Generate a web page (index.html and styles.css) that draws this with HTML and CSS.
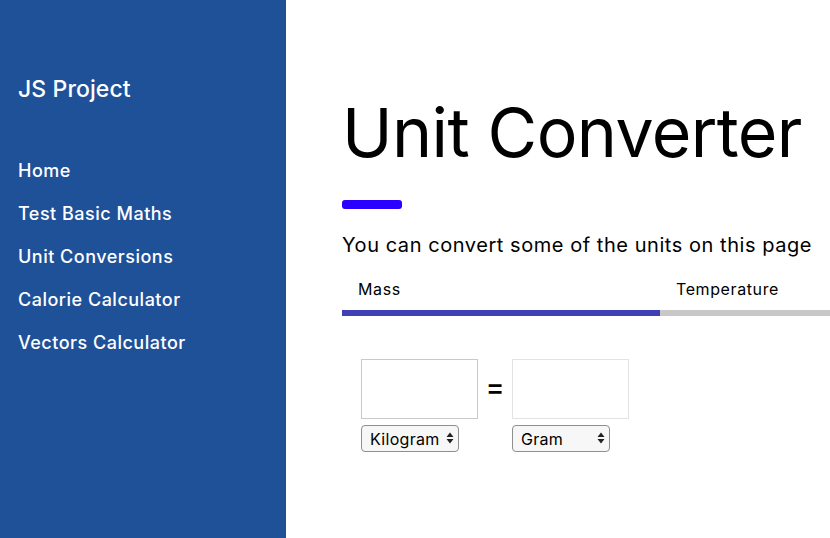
FILE: index.html
```html
<!DOCTYPE html>
<html>
<head>
<meta charset="utf-8">
<link rel="stylesheet" href="styles.css">
</head>
<body>
<div class="app">
  <aside class="sidebar">
    <div class="brand">JS Project</div>
    <nav class="nav">
      <a href="#">Home</a>
      <a href="#">Test Basic Maths</a>
      <a href="#">Unit Conversions</a>
      <a href="#">Calorie Calculator</a>
      <a href="#">Vectors Calculator</a>
    </nav>
  </aside>
  <main class="main">
    <h1 class="title">Unit Converter</h1>
    <div class="accent"></div>
    <p class="lead">You can convert some of the units on this page</p>
    <div class="tabs">
      <div class="tab active">Mass</div>
      <div class="tab">Temperature</div>
    </div>
    <div class="converter">
      <div class="col">
        <input class="box" type="text">
        <div class="sel">
          <select><option>Kilogram</option><option>Gram</option></select>
          <svg class="arrows" width="8" height="12" viewBox="0 0 8 12"><path d="M4 0.5 L7.5 5 H0.5 Z M4 11.5 L7.5 7 H0.5 Z" fill="#222"/></svg>
        </div>
      </div>
      <div class="eq">=</div>
      <div class="col">
        <input class="box light" type="text">
        <div class="sel">
          <select><option>Gram</option><option>Kilogram</option></select>
          <svg class="arrows" width="8" height="12" viewBox="0 0 8 12"><path d="M4 0.5 L7.5 5 H0.5 Z M4 11.5 L7.5 7 H0.5 Z" fill="#222"/></svg>
        </div>
      </div>
    </div>
  </main>
</div>
</body>
</html>
```
FILE: styles.css
```css
* { box-sizing: border-box; }
html, body { margin: 0; padding: 0; }
body {
  font-family: "Inter", "Noto Sans", sans-serif;
  color: #000;
  background: #fff;
  overflow: hidden;
}
.app {
  display: flex;
  height: 538px;
}
.sidebar {
  width: 286px;
  flex: 0 0 286px;
  background: #1f5199;
  color: #fff;
  padding: 74px 0 0 18px;
}
.brand {
  font-size: 23px;
  font-weight: 500;
  line-height: 30px;
  letter-spacing: 0.1px;
}
.nav {
  display: flex;
  flex-direction: column;
  margin-top: 55px;
  gap: 19px;
}
.nav a {
  color: #fff;
  text-decoration: none;
  font-size: 18px;
  font-weight: 500;
  line-height: 24px;
  letter-spacing: 0.5px;
}
.main {
  flex: 1;
  padding: 92px 0 0 56px;
  overflow: hidden;
}
.title {
  margin: 0;
  font-size: 68px;
  font-weight: 400;
  line-height: 80px;
  letter-spacing: -0.6px;
}
.accent {
  width: 60px;
  height: 9px;
  background: #2a00ff;
  border-radius: 3px;
  margin-top: 28px;
}
.lead {
  margin: 22px 0 0;
  font-size: 20px;
  line-height: 28px;
  letter-spacing: 0.55px;
}
.tabs {
  display: flex;
  margin-top: 9px;
  width: 636px;
}
.tab {
  flex: 0 0 318px;
  padding: 11px 16px 11px;
  font-size: 16px;
  line-height: 20px;
  letter-spacing: 0.6px;
  border-bottom: 6px solid #c8c8c8;
}
.tab.active {
  border-bottom-color: #3f40b5;
}
.converter {
  display: flex;
  align-items: flex-start;
  margin-top: 43px;
  padding-left: 19px;
}
.col {
  display: flex;
  flex-direction: column;
  gap: 6px;
}
.box {
  width: 117px;
  height: 60px;
  border: 1px solid #c9c9c9;
  font: inherit;
}
.box.light { border-color: #e3e3e3; }
.eq {
  width: 34px;
  text-align: center;
  font-size: 28px;
  font-weight: 500;
  line-height: 56px;
}
.sel {
  position: relative;
  width: 98px;
}
.sel select {
  appearance: none;
  -webkit-appearance: none;
  width: 98px;
  height: 27px;
  padding: 0 0 0 8px;
  border: 1px solid #8f8f8f;
  border-radius: 4px;
  background: #f7f7f7;
  font-family: inherit;
  font-size: 16px;
  letter-spacing: 0.3px;
  color: #000;
}
.sel .arrows {
  position: absolute;
  right: 5px;
  top: 7px;
  pointer-events: none;
}
```
